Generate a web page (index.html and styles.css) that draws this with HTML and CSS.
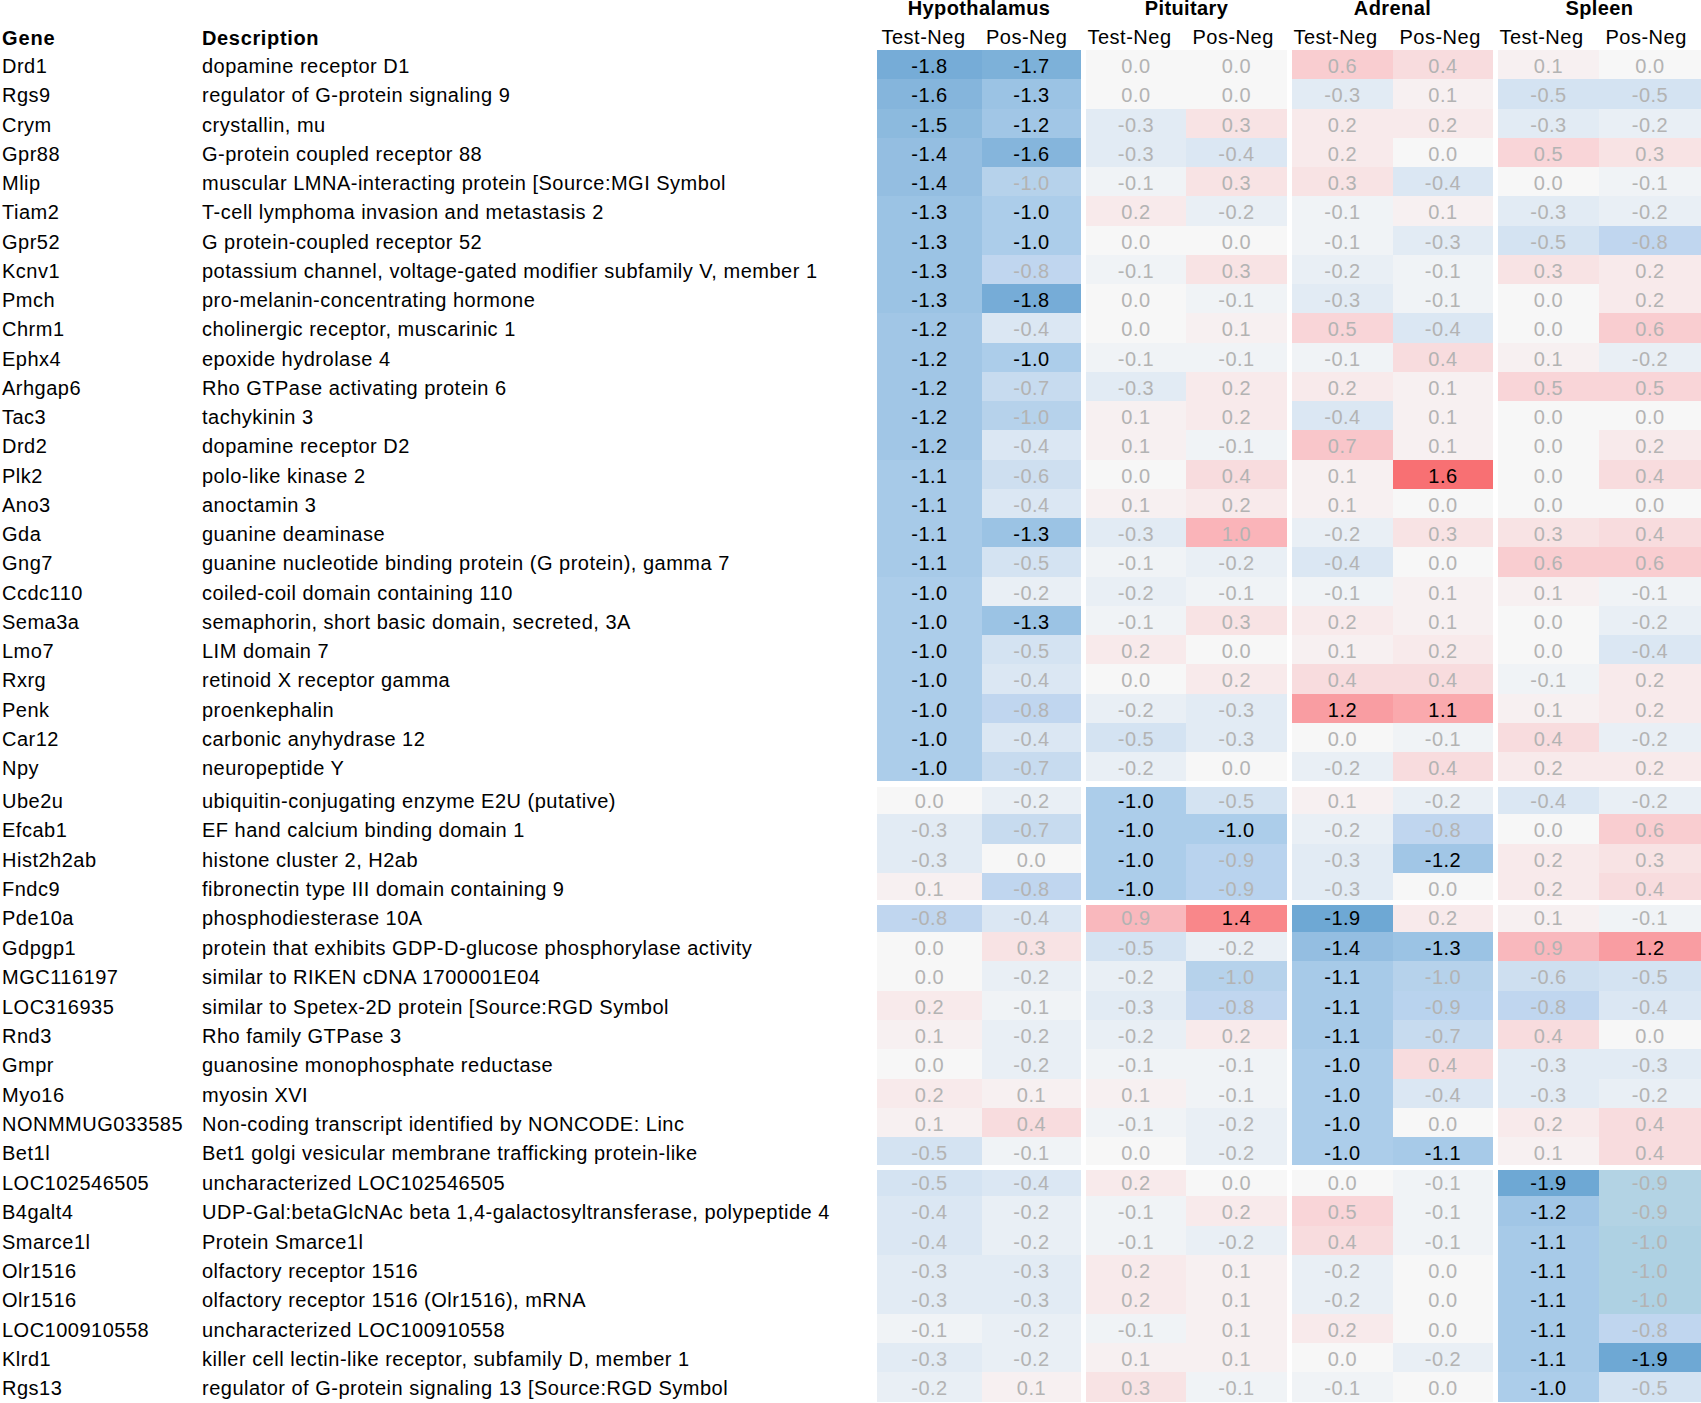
FILE: index.html
```html
<!DOCTYPE html>
<html>
<head>
<meta charset="utf-8">
<title>Gene expression heatmap</title>
<link rel="stylesheet" href="styles.css">
</head>
<body>
<div class="sheet">
  <div class="head">
    <div class="hgene">Gene</div>
    <div class="hdesc">Description</div>
    <div class="thead hyp"><div class="tname">Hypothalamus</div><div class="subs"><span class="st">Test-Neg</span><span class="sp">Pos-Neg</span></div></div>
    <div class="thead pit"><div class="tname">Pituitary</div><div class="subs"><span class="st">Test-Neg</span><span class="sp">Pos-Neg</span></div></div>
    <div class="thead adr"><div class="tname">Adrenal</div><div class="subs"><span class="st">Test-Neg</span><span class="sp">Pos-Neg</span></div></div>
    <div class="thead spl"><div class="tname">Spleen</div><div class="subs"><span class="st">Test-Neg</span><span class="sp">Pos-Neg</span></div></div>
  </div>

  <div class="group g1">
    <div class="row"><div class="gene">Drd1</div><div class="desc">dopamine receptor D1</div><div class="pair hyp"><div class="c n18 s">-1.8</div><div class="c n17 s">-1.7</div></div><div class="pair pit"><div class="c z">0.0</div><div class="c z">0.0</div></div><div class="pair adr"><div class="c p06">0.6</div><div class="c p04">0.4</div></div><div class="pair spl"><div class="c p01">0.1</div><div class="c z">0.0</div></div></div>
    <div class="row"><div class="gene">Rgs9</div><div class="desc">regulator of G-protein signaling 9</div><div class="pair hyp"><div class="c n16 s">-1.6</div><div class="c n13 s">-1.3</div></div><div class="pair pit"><div class="c z">0.0</div><div class="c z">0.0</div></div><div class="pair adr"><div class="c n03">-0.3</div><div class="c p01">0.1</div></div><div class="pair spl"><div class="c n05">-0.5</div><div class="c n05">-0.5</div></div></div>
    <div class="row"><div class="gene">Crym</div><div class="desc">crystallin, mu</div><div class="pair hyp"><div class="c n15 s">-1.5</div><div class="c n12 s">-1.2</div></div><div class="pair pit"><div class="c n03">-0.3</div><div class="c p03">0.3</div></div><div class="pair adr"><div class="c p02">0.2</div><div class="c p02">0.2</div></div><div class="pair spl"><div class="c n03">-0.3</div><div class="c n02">-0.2</div></div></div>
    <div class="row"><div class="gene">Gpr88</div><div class="desc">G-protein coupled receptor 88</div><div class="pair hyp"><div class="c n14 s">-1.4</div><div class="c n16 s">-1.6</div></div><div class="pair pit"><div class="c n03">-0.3</div><div class="c n04">-0.4</div></div><div class="pair adr"><div class="c p02">0.2</div><div class="c z">0.0</div></div><div class="pair spl"><div class="c p05">0.5</div><div class="c p03">0.3</div></div></div>
    <div class="row"><div class="gene">Mlip</div><div class="desc">muscular LMNA-interacting protein [Source:MGI Symbol</div><div class="pair hyp"><div class="c n14 s">-1.4</div><div class="c n10l">-1.0</div></div><div class="pair pit"><div class="c n01">-0.1</div><div class="c p03">0.3</div></div><div class="pair adr"><div class="c p03">0.3</div><div class="c n04">-0.4</div></div><div class="pair spl"><div class="c z">0.0</div><div class="c n01">-0.1</div></div></div>
    <div class="row"><div class="gene">Tiam2</div><div class="desc">T-cell lymphoma invasion and metastasis 2</div><div class="pair hyp"><div class="c n13 s">-1.3</div><div class="c n10 s">-1.0</div></div><div class="pair pit"><div class="c p02">0.2</div><div class="c n02">-0.2</div></div><div class="pair adr"><div class="c n01">-0.1</div><div class="c p01">0.1</div></div><div class="pair spl"><div class="c n03">-0.3</div><div class="c n02">-0.2</div></div></div>
    <div class="row"><div class="gene">Gpr52</div><div class="desc">G protein-coupled receptor 52</div><div class="pair hyp"><div class="c n13 s">-1.3</div><div class="c n10 s">-1.0</div></div><div class="pair pit"><div class="c z">0.0</div><div class="c z">0.0</div></div><div class="pair adr"><div class="c n01">-0.1</div><div class="c n03">-0.3</div></div><div class="pair spl"><div class="c n05">-0.5</div><div class="c n08">-0.8</div></div></div>
    <div class="row"><div class="gene">Kcnv1</div><div class="desc">potassium channel, voltage-gated modifier subfamily V, member 1</div><div class="pair hyp"><div class="c n13 s">-1.3</div><div class="c n08">-0.8</div></div><div class="pair pit"><div class="c n01">-0.1</div><div class="c p03">0.3</div></div><div class="pair adr"><div class="c n02">-0.2</div><div class="c n01">-0.1</div></div><div class="pair spl"><div class="c p03">0.3</div><div class="c p02">0.2</div></div></div>
    <div class="row"><div class="gene">Pmch</div><div class="desc">pro-melanin-concentrating hormone</div><div class="pair hyp"><div class="c n13 s">-1.3</div><div class="c n18 s">-1.8</div></div><div class="pair pit"><div class="c z">0.0</div><div class="c n01">-0.1</div></div><div class="pair adr"><div class="c n03">-0.3</div><div class="c n01">-0.1</div></div><div class="pair spl"><div class="c z">0.0</div><div class="c p02">0.2</div></div></div>
    <div class="row"><div class="gene">Chrm1</div><div class="desc">cholinergic receptor, muscarinic 1</div><div class="pair hyp"><div class="c n12 s">-1.2</div><div class="c n04">-0.4</div></div><div class="pair pit"><div class="c z">0.0</div><div class="c p01">0.1</div></div><div class="pair adr"><div class="c p05">0.5</div><div class="c n04">-0.4</div></div><div class="pair spl"><div class="c z">0.0</div><div class="c p06">0.6</div></div></div>
    <div class="row"><div class="gene">Ephx4</div><div class="desc">epoxide hydrolase 4</div><div class="pair hyp"><div class="c n12 s">-1.2</div><div class="c n10 s">-1.0</div></div><div class="pair pit"><div class="c n01">-0.1</div><div class="c n01">-0.1</div></div><div class="pair adr"><div class="c n01">-0.1</div><div class="c p04">0.4</div></div><div class="pair spl"><div class="c p01">0.1</div><div class="c n02">-0.2</div></div></div>
    <div class="row"><div class="gene">Arhgap6</div><div class="desc">Rho GTPase activating protein 6</div><div class="pair hyp"><div class="c n12 s">-1.2</div><div class="c n07">-0.7</div></div><div class="pair pit"><div class="c n03">-0.3</div><div class="c p02">0.2</div></div><div class="pair adr"><div class="c p02">0.2</div><div class="c p01">0.1</div></div><div class="pair spl"><div class="c p05">0.5</div><div class="c p05">0.5</div></div></div>
    <div class="row"><div class="gene">Tac3</div><div class="desc">tachykinin 3</div><div class="pair hyp"><div class="c n12 s">-1.2</div><div class="c n10l">-1.0</div></div><div class="pair pit"><div class="c p01">0.1</div><div class="c p02">0.2</div></div><div class="pair adr"><div class="c n04">-0.4</div><div class="c p01">0.1</div></div><div class="pair spl"><div class="c z">0.0</div><div class="c z">0.0</div></div></div>
    <div class="row"><div class="gene">Drd2</div><div class="desc">dopamine receptor D2</div><div class="pair hyp"><div class="c n12 s">-1.2</div><div class="c n04">-0.4</div></div><div class="pair pit"><div class="c p01">0.1</div><div class="c n01">-0.1</div></div><div class="pair adr"><div class="c p07">0.7</div><div class="c p01">0.1</div></div><div class="pair spl"><div class="c z">0.0</div><div class="c p02">0.2</div></div></div>
    <div class="row"><div class="gene">Plk2</div><div class="desc">polo-like kinase 2</div><div class="pair hyp"><div class="c n11 s">-1.1</div><div class="c n06">-0.6</div></div><div class="pair pit"><div class="c z">0.0</div><div class="c p04">0.4</div></div><div class="pair adr"><div class="c p01">0.1</div><div class="c p16 s">1.6</div></div><div class="pair spl"><div class="c z">0.0</div><div class="c p04">0.4</div></div></div>
    <div class="row"><div class="gene">Ano3</div><div class="desc">anoctamin 3</div><div class="pair hyp"><div class="c n11 s">-1.1</div><div class="c n04">-0.4</div></div><div class="pair pit"><div class="c p01">0.1</div><div class="c p02">0.2</div></div><div class="pair adr"><div class="c p01">0.1</div><div class="c z">0.0</div></div><div class="pair spl"><div class="c z">0.0</div><div class="c z">0.0</div></div></div>
    <div class="row"><div class="gene">Gda</div><div class="desc">guanine deaminase</div><div class="pair hyp"><div class="c n11 s">-1.1</div><div class="c n13 s">-1.3</div></div><div class="pair pit"><div class="c n03">-0.3</div><div class="c p10">1.0</div></div><div class="pair adr"><div class="c n02">-0.2</div><div class="c p03">0.3</div></div><div class="pair spl"><div class="c p03">0.3</div><div class="c p04">0.4</div></div></div>
    <div class="row"><div class="gene">Gng7</div><div class="desc">guanine nucleotide binding protein (G protein), gamma 7</div><div class="pair hyp"><div class="c n11 s">-1.1</div><div class="c n05">-0.5</div></div><div class="pair pit"><div class="c n01">-0.1</div><div class="c n02">-0.2</div></div><div class="pair adr"><div class="c n04">-0.4</div><div class="c z">0.0</div></div><div class="pair spl"><div class="c p06">0.6</div><div class="c p06">0.6</div></div></div>
    <div class="row"><div class="gene">Ccdc110</div><div class="desc">coiled-coil domain containing 110</div><div class="pair hyp"><div class="c n10 s">-1.0</div><div class="c n02">-0.2</div></div><div class="pair pit"><div class="c n02">-0.2</div><div class="c n01">-0.1</div></div><div class="pair adr"><div class="c n01">-0.1</div><div class="c p01">0.1</div></div><div class="pair spl"><div class="c p01">0.1</div><div class="c n01">-0.1</div></div></div>
    <div class="row"><div class="gene">Sema3a</div><div class="desc">semaphorin, short basic domain, secreted, 3A</div><div class="pair hyp"><div class="c n10 s">-1.0</div><div class="c n13 s">-1.3</div></div><div class="pair pit"><div class="c n01">-0.1</div><div class="c p03">0.3</div></div><div class="pair adr"><div class="c p02">0.2</div><div class="c p01">0.1</div></div><div class="pair spl"><div class="c z">0.0</div><div class="c n02">-0.2</div></div></div>
    <div class="row"><div class="gene">Lmo7</div><div class="desc">LIM domain 7</div><div class="pair hyp"><div class="c n10 s">-1.0</div><div class="c n05">-0.5</div></div><div class="pair pit"><div class="c p02">0.2</div><div class="c z">0.0</div></div><div class="pair adr"><div class="c p01">0.1</div><div class="c p02">0.2</div></div><div class="pair spl"><div class="c z">0.0</div><div class="c n04">-0.4</div></div></div>
    <div class="row"><div class="gene">Rxrg</div><div class="desc">retinoid X receptor gamma</div><div class="pair hyp"><div class="c n10 s">-1.0</div><div class="c n04">-0.4</div></div><div class="pair pit"><div class="c z">0.0</div><div class="c p02">0.2</div></div><div class="pair adr"><div class="c p04">0.4</div><div class="c p04">0.4</div></div><div class="pair spl"><div class="c n01">-0.1</div><div class="c p02">0.2</div></div></div>
    <div class="row"><div class="gene">Penk</div><div class="desc">proenkephalin</div><div class="pair hyp"><div class="c n10 s">-1.0</div><div class="c n08">-0.8</div></div><div class="pair pit"><div class="c n02">-0.2</div><div class="c n03">-0.3</div></div><div class="pair adr"><div class="c p12 s">1.2</div><div class="c p11 s">1.1</div></div><div class="pair spl"><div class="c p01">0.1</div><div class="c p02">0.2</div></div></div>
    <div class="row"><div class="gene">Car12</div><div class="desc">carbonic anyhydrase 12</div><div class="pair hyp"><div class="c n10 s">-1.0</div><div class="c n04">-0.4</div></div><div class="pair pit"><div class="c n05">-0.5</div><div class="c n03">-0.3</div></div><div class="pair adr"><div class="c z">0.0</div><div class="c n01">-0.1</div></div><div class="pair spl"><div class="c p04">0.4</div><div class="c n02">-0.2</div></div></div>
    <div class="row"><div class="gene">Npy</div><div class="desc">neuropeptide Y</div><div class="pair hyp"><div class="c n10 s">-1.0</div><div class="c n07">-0.7</div></div><div class="pair pit"><div class="c n02">-0.2</div><div class="c z">0.0</div></div><div class="pair adr"><div class="c n02">-0.2</div><div class="c p04">0.4</div></div><div class="pair spl"><div class="c p02">0.2</div><div class="c p02">0.2</div></div></div>
  </div>

  <div class="group g2">
    <div class="row"><div class="gene">Ube2u</div><div class="desc">ubiquitin-conjugating enzyme E2U (putative)</div><div class="pair hyp"><div class="c z">0.0</div><div class="c n02">-0.2</div></div><div class="pair pit"><div class="c n10 s">-1.0</div><div class="c n05">-0.5</div></div><div class="pair adr"><div class="c p01">0.1</div><div class="c n02">-0.2</div></div><div class="pair spl"><div class="c n04">-0.4</div><div class="c n02">-0.2</div></div></div>
    <div class="row"><div class="gene">Efcab1</div><div class="desc">EF hand calcium binding domain 1</div><div class="pair hyp"><div class="c n03">-0.3</div><div class="c n07">-0.7</div></div><div class="pair pit"><div class="c n10 s">-1.0</div><div class="c n10 s">-1.0</div></div><div class="pair adr"><div class="c n02">-0.2</div><div class="c n08">-0.8</div></div><div class="pair spl"><div class="c z">0.0</div><div class="c p06">0.6</div></div></div>
    <div class="row"><div class="gene">Hist2h2ab</div><div class="desc">histone cluster 2, H2ab</div><div class="pair hyp"><div class="c n03">-0.3</div><div class="c z">0.0</div></div><div class="pair pit"><div class="c n10 s">-1.0</div><div class="c n09">-0.9</div></div><div class="pair adr"><div class="c n03">-0.3</div><div class="c n12 s">-1.2</div></div><div class="pair spl"><div class="c p02">0.2</div><div class="c p03">0.3</div></div></div>
    <div class="row"><div class="gene">Fndc9</div><div class="desc">fibronectin type III domain containing 9</div><div class="pair hyp"><div class="c p01">0.1</div><div class="c n08">-0.8</div></div><div class="pair pit"><div class="c n10 s">-1.0</div><div class="c n09">-0.9</div></div><div class="pair adr"><div class="c n03">-0.3</div><div class="c z">0.0</div></div><div class="pair spl"><div class="c p02">0.2</div><div class="c p04">0.4</div></div></div>
  </div>

  <div class="group g3">
    <div class="row"><div class="gene">Pde10a</div><div class="desc">phosphodiesterase 10A</div><div class="pair hyp"><div class="c n08">-0.8</div><div class="c n04">-0.4</div></div><div class="pair pit"><div class="c p09">0.9</div><div class="c p14 s">1.4</div></div><div class="pair adr"><div class="c n19 s">-1.9</div><div class="c p02">0.2</div></div><div class="pair spl"><div class="c p01">0.1</div><div class="c n01">-0.1</div></div></div>
    <div class="row"><div class="gene">Gdpgp1</div><div class="desc">protein that exhibits GDP-D-glucose phosphorylase activity</div><div class="pair hyp"><div class="c z">0.0</div><div class="c p03">0.3</div></div><div class="pair pit"><div class="c n05">-0.5</div><div class="c n02">-0.2</div></div><div class="pair adr"><div class="c n14 s">-1.4</div><div class="c n13 s">-1.3</div></div><div class="pair spl"><div class="c p09">0.9</div><div class="c p12 s">1.2</div></div></div>
    <div class="row"><div class="gene">MGC116197</div><div class="desc">similar to RIKEN cDNA 1700001E04</div><div class="pair hyp"><div class="c z">0.0</div><div class="c n02">-0.2</div></div><div class="pair pit"><div class="c n02">-0.2</div><div class="c n10l">-1.0</div></div><div class="pair adr"><div class="c n11 s">-1.1</div><div class="c n10l">-1.0</div></div><div class="pair spl"><div class="c n06">-0.6</div><div class="c n05">-0.5</div></div></div>
    <div class="row"><div class="gene">LOC316935</div><div class="desc">similar to Spetex-2D protein [Source:RGD Symbol</div><div class="pair hyp"><div class="c p02">0.2</div><div class="c n01">-0.1</div></div><div class="pair pit"><div class="c n03">-0.3</div><div class="c n08">-0.8</div></div><div class="pair adr"><div class="c n11 s">-1.1</div><div class="c n09">-0.9</div></div><div class="pair spl"><div class="c n08">-0.8</div><div class="c n04">-0.4</div></div></div>
    <div class="row"><div class="gene">Rnd3</div><div class="desc">Rho family GTPase 3</div><div class="pair hyp"><div class="c p01">0.1</div><div class="c n02">-0.2</div></div><div class="pair pit"><div class="c n02">-0.2</div><div class="c p02">0.2</div></div><div class="pair adr"><div class="c n11 s">-1.1</div><div class="c n07">-0.7</div></div><div class="pair spl"><div class="c p04">0.4</div><div class="c z">0.0</div></div></div>
    <div class="row"><div class="gene">Gmpr</div><div class="desc">guanosine monophosphate reductase</div><div class="pair hyp"><div class="c z">0.0</div><div class="c n02">-0.2</div></div><div class="pair pit"><div class="c n01">-0.1</div><div class="c n01">-0.1</div></div><div class="pair adr"><div class="c n10 s">-1.0</div><div class="c p04">0.4</div></div><div class="pair spl"><div class="c n03">-0.3</div><div class="c n03">-0.3</div></div></div>
    <div class="row"><div class="gene">Myo16</div><div class="desc">myosin XVI</div><div class="pair hyp"><div class="c p02">0.2</div><div class="c p01">0.1</div></div><div class="pair pit"><div class="c p01">0.1</div><div class="c n01">-0.1</div></div><div class="pair adr"><div class="c n10 s">-1.0</div><div class="c n04">-0.4</div></div><div class="pair spl"><div class="c n03">-0.3</div><div class="c n02">-0.2</div></div></div>
    <div class="row"><div class="gene">NONMMUG033585</div><div class="desc">Non-coding transcript identified by NONCODE: Linc</div><div class="pair hyp"><div class="c p01">0.1</div><div class="c p04">0.4</div></div><div class="pair pit"><div class="c n01">-0.1</div><div class="c n02">-0.2</div></div><div class="pair adr"><div class="c n10 s">-1.0</div><div class="c z">0.0</div></div><div class="pair spl"><div class="c p02">0.2</div><div class="c p04">0.4</div></div></div>
    <div class="row"><div class="gene">Bet1l</div><div class="desc">Bet1 golgi vesicular membrane trafficking protein-like</div><div class="pair hyp"><div class="c n05">-0.5</div><div class="c n01">-0.1</div></div><div class="pair pit"><div class="c z">0.0</div><div class="c n02">-0.2</div></div><div class="pair adr"><div class="c n10 s">-1.0</div><div class="c n11 s">-1.1</div></div><div class="pair spl"><div class="c p01">0.1</div><div class="c p04">0.4</div></div></div>
  </div>

  <div class="group g4">
    <div class="row"><div class="gene">LOC102546505</div><div class="desc">uncharacterized LOC102546505</div><div class="pair hyp"><div class="c n05">-0.5</div><div class="c n04">-0.4</div></div><div class="pair pit"><div class="c p02">0.2</div><div class="c z">0.0</div></div><div class="pair adr"><div class="c z">0.0</div><div class="c n01">-0.1</div></div><div class="pair spl"><div class="c n19 s">-1.9</div><div class="c t09">-0.9</div></div></div>
    <div class="row"><div class="gene">B4galt4</div><div class="desc">UDP-Gal:betaGlcNAc beta 1,4-galactosyltransferase, polypeptide 4</div><div class="pair hyp"><div class="c n04">-0.4</div><div class="c n02">-0.2</div></div><div class="pair pit"><div class="c n01">-0.1</div><div class="c p02">0.2</div></div><div class="pair adr"><div class="c p05">0.5</div><div class="c n01">-0.1</div></div><div class="pair spl"><div class="c n12 s">-1.2</div><div class="c t09">-0.9</div></div></div>
    <div class="row"><div class="gene">Smarce1l</div><div class="desc">Protein Smarce1l</div><div class="pair hyp"><div class="c n04">-0.4</div><div class="c n02">-0.2</div></div><div class="pair pit"><div class="c n01">-0.1</div><div class="c n02">-0.2</div></div><div class="pair adr"><div class="c p04">0.4</div><div class="c n01">-0.1</div></div><div class="pair spl"><div class="c n11 s">-1.1</div><div class="c t10">-1.0</div></div></div>
    <div class="row"><div class="gene">Olr1516</div><div class="desc">olfactory receptor 1516</div><div class="pair hyp"><div class="c n03">-0.3</div><div class="c n03">-0.3</div></div><div class="pair pit"><div class="c p02">0.2</div><div class="c p01">0.1</div></div><div class="pair adr"><div class="c n02">-0.2</div><div class="c z">0.0</div></div><div class="pair spl"><div class="c n11 s">-1.1</div><div class="c t10">-1.0</div></div></div>
    <div class="row"><div class="gene">Olr1516</div><div class="desc">olfactory receptor 1516 (Olr1516), mRNA</div><div class="pair hyp"><div class="c n03">-0.3</div><div class="c n03">-0.3</div></div><div class="pair pit"><div class="c p02">0.2</div><div class="c p01">0.1</div></div><div class="pair adr"><div class="c n02">-0.2</div><div class="c z">0.0</div></div><div class="pair spl"><div class="c n11 s">-1.1</div><div class="c t10">-1.0</div></div></div>
    <div class="row"><div class="gene">LOC100910558</div><div class="desc">uncharacterized LOC100910558</div><div class="pair hyp"><div class="c n01">-0.1</div><div class="c n02">-0.2</div></div><div class="pair pit"><div class="c n01">-0.1</div><div class="c p01">0.1</div></div><div class="pair adr"><div class="c p02">0.2</div><div class="c z">0.0</div></div><div class="pair spl"><div class="c n11 s">-1.1</div><div class="c n08">-0.8</div></div></div>
    <div class="row"><div class="gene">Klrd1</div><div class="desc">killer cell lectin-like receptor, subfamily D, member 1</div><div class="pair hyp"><div class="c n03">-0.3</div><div class="c n02">-0.2</div></div><div class="pair pit"><div class="c p01">0.1</div><div class="c p01">0.1</div></div><div class="pair adr"><div class="c z">0.0</div><div class="c n02">-0.2</div></div><div class="pair spl"><div class="c n11 s">-1.1</div><div class="c n19 s">-1.9</div></div></div>
    <div class="row"><div class="gene">Rgs13</div><div class="desc">regulator of G-protein signaling 13 [Source:RGD Symbol</div><div class="pair hyp"><div class="c n02">-0.2</div><div class="c p01">0.1</div></div><div class="pair pit"><div class="c p03">0.3</div><div class="c n01">-0.1</div></div><div class="pair adr"><div class="c n01">-0.1</div><div class="c z">0.0</div></div><div class="pair spl"><div class="c n10 s">-1.0</div><div class="c n05">-0.5</div></div></div>
  </div>
</div>
</body>
</html>
```
FILE: styles.css
```css
html, body {
  margin: 0;
  padding: 0;
  background: #ffffff;
}
body {
  font-family: "Liberation Sans", Arial, sans-serif;
  font-size: 20px;
  letter-spacing: 0.5px;
  color: #000;
  white-space: nowrap;
  overflow: hidden;
}
.sheet {
  width: 1701px;
}

/* header */
.head {
  display: flex;
  height: 50px;
}
.hgene, .hdesc {
  box-sizing: border-box;
  height: 50px;
  padding-top: 26px;
  padding-left: 2px;
  line-height: 24px;
  font-weight: bold;
  letter-spacing: 0.9px;
}
.hgene { width: 200px; }
.hdesc { width: 677px; letter-spacing: 0.65px; }
.thead {
  display: flex;
  flex-direction: column;
  margin-left: 5px;
}
.thead.hyp { margin-left: 0; }
.tname {
  height: 16px;
  line-height: 16px;
  text-align: center;
  font-weight: bold;
  letter-spacing: 0.4px;
}
.subs {
  display: grid;
  padding-top: 9px;
  line-height: 24px;
}
.hyp .subs { grid-template-columns: 105px 99px; }
.pit .subs { grid-template-columns: 100px 101px; }
.adr .subs { grid-template-columns: 101px 100px; }
.spl .subs { grid-template-columns: 101px 102px; }
.st { padding-left: 1.5px; }
.sp { padding-left: 6.5px; }
.hyp .st { padding-left: 4.5px; }
.hyp .sp { padding-left: 4px; }

/* body rows */
.group { --h: 29.39px; }
.g1 { --h: 29.25px; }
.g2 { margin-top: 3.7px; }
.row {
  display: flex;
  height: var(--h);
}
.gene, .desc, .c {
  box-sizing: border-box;
  height: var(--h);
  padding-top: 3px;
  line-height: calc(var(--h) - 3px);
}
.gene { width: 200px; padding-left: 2px; }
.desc { width: 677px; padding-left: 2px; }
.pair {
  display: grid;
  margin-left: 5px;
}
.pair.hyp { margin-left: 0; grid-template-columns: 105px 99px; }
.pair.pit { grid-template-columns: 100px 101px; }
.pair.adr { grid-template-columns: 101px 100px; }
.pair.spl { grid-template-columns: 101px 102px; }
.c {
  text-align: center;
  color: #b3b3b3;
}
.c.s { color: #000; }
/* white bands separating the gene groups */
.g2 .row:last-child .c, .g3 .row:last-child .c { box-shadow: inset 0 -2px 0 #fff; }
.g2 .row:first-child .c { box-shadow: inset 0 2px 0 #fff; }
.g3 .row:first-child .c, .g4 .row:first-child .c { box-shadow: inset 0 3px 0 #fff; }

/* colour scale: blue (negative) → neutral → red (positive) */
.n19 { background: #6ea8d4; }
.n18 { background: #76acd7; }
.n17 { background: #7db1d9; }
.n16 { background: #85b5dc; }
.n15 { background: #8cbade; }
.n14 { background: #94bee1; }
.n13 { background: #9bc3e4; }
.n12 { background: #a1c6e6; }
.n11 { background: #a7cae8; }
.n10 { background: #accdea; }
.n10l { background: #b6d2eb; }
.t09 { background: #b3d3e4; }
.t10 { background: #aed1e3; }
.n09 { background: #b9d3ee; }
.n08 { background: #c0d6ef; }
.n07 { background: #c7dbef; }
.n06 { background: #cedff0; }
.n05 { background: #d4e3f2; }
.n04 { background: #dbe7f3; }
.n03 { background: #e2ebf4; }
.n02 { background: #e9eff5; }
.n01 { background: #f0f3f6; }
.z   { background: #f7f7f7; }
.p01 { background: #f7f0f1; }
.p02 { background: #f8eaeb; }
.p03 { background: #f8e3e4; }
.p04 { background: #f8dcde; }
.p05 { background: #f9d5d8; }
.p06 { background: #f9cdd0; }
.p07 { background: #f9c6ca; }
.p09 { background: #f9b8bd; }
.p10 { background: #fab4b9; }
.p11 { background: #faa9ad; }
.p12 { background: #f99da2; }
.p14 { background: #f9878a; }
.p16 { background: #f87073; }
```
